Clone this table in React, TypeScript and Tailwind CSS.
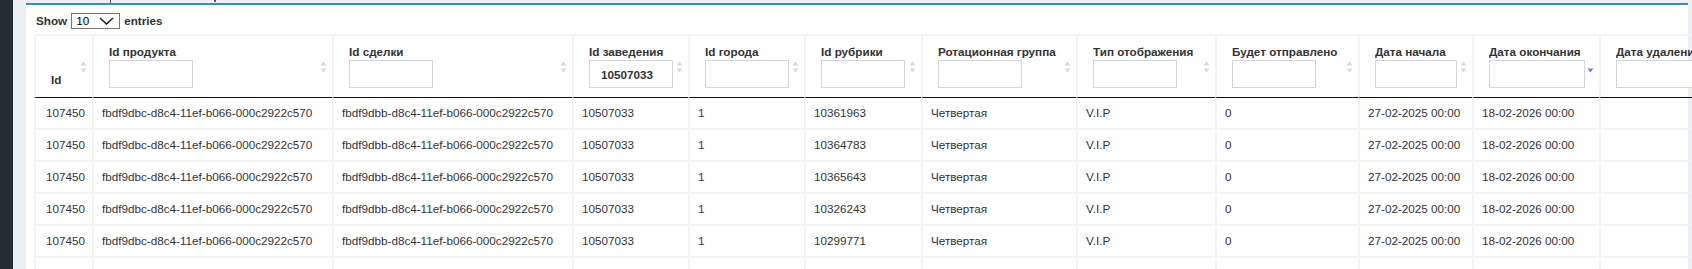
import React from "react";

type Col = {
  label: string;
  w: string;
  input?: string;
  value?: string;
  sort: "both" | "desc" | "none";
};

const cols: Col[] = [
  { label: "Id", w: "w-[58px]", sort: "both" },
  { label: "Id продукта", w: "w-[240px]", input: "w-[84px]", sort: "both" },
  { label: "Id сделки", w: "w-[240px]", input: "w-[84px]", sort: "both" },
  { label: "Id заведения", w: "w-[116px]", input: "w-[84px]", value: "10507033", sort: "both" },
  { label: "Id города", w: "w-[116px]", input: "w-[84px]", sort: "both" },
  { label: "Id рубрики", w: "w-[117px]", input: "w-[84px]", sort: "both" },
  { label: "Ротационная группа", w: "w-[155px]", input: "w-[84px]", sort: "both" },
  { label: "Тип отображения", w: "w-[139px]", input: "w-[84px]", sort: "both" },
  { label: "Будет отправлено", w: "w-[143px]", input: "w-[84px]", sort: "both" },
  { label: "Дата начала", w: "w-[114px]", input: "w-[82px]", sort: "both" },
  { label: "Дата окончания", w: "w-[127px]", input: "w-[96px]", sort: "desc" },
  { label: "Дата удаления", w: "w-[142px]", input: "w-[96px]", sort: "none" },
];

// last entry is the row cut off by the bottom edge, only its borders show
const rubrics = ["10361963", "10364783", "10365643", "10326243", "10299771", null];

function SortIcon({ kind }: { kind: Col["sort"] }) {
  if (kind === "none") return null;
  return (
    <span className="absolute right-[5px] top-1/2 -translate-y-1/2 block">
      <svg width="7" height="12" viewBox="0 0 7 12">
        {kind === "both" && <path d="M3.5 0.5L6.5 4.5H0.5Z" fill="#d9d9d9" />}
        <path d="M0.5 7.5H6.5L3.5 11.5Z" fill={kind === "desc" ? "#7b7bd6" : "#d9d9d9"} />
      </svg>
    </span>
  );
}

export default function App() {
  return (
    <div
      className="w-[1692px] h-[269px] overflow-hidden flex bg-[#ecf0f5] text-[#333]"
      style={{ fontFamily: '"Liberation Sans", Arial, sans-serif' }}
    >
      <div className="w-[13px] shrink-0 bg-[#222d32]" />
      <div className="flex-1 min-w-0 flex flex-col pl-[13px] pr-[4px]">
        {/* cut-off title above the box */}
        <div className="h-[4px] flex items-start">
          <span className="ml-[84px] w-[1px] h-[3px] bg-[#555]" />
          <span className="ml-[103px] w-[2px] h-[2px] bg-[#555]" />
        </div>
        <div className="flex-1 bg-white border-t-2 border-[#3c8dbc] pl-[8px]">
          <div className="h-[16px] mt-[8px] ml-[2px] flex items-center gap-[4px] text-[11.7px] font-bold">
            <span>Show</span>
            <div className="w-[49px] h-[16px] border border-[#767676] flex items-center justify-between pl-[4px] pr-[5px] font-normal text-black">
              <span>10</span>
              <svg width="15" height="8" viewBox="0 0 15 8">
                <path d="M1 1L7.5 7L14 1" fill="none" stroke="#222" strokeWidth="1.6" />
              </svg>
            </div>
            <span>entries</span>
          </div>
          <table className="mt-[5px] table-fixed border-separate border-spacing-0 w-[1707px] text-[11.7px]">
            <thead>
              <tr>
                {cols.map((c, i) => (
                  <th
                    key={c.label}
                    className={`${c.w} relative align-bottom text-left font-bold pl-[15px] pt-[8px] pb-[9px] border-l-2 border-t-2 border-[#f4f4f4] border-b border-b-[#111] ${
                      i === cols.length - 1 ? "border-r-2" : ""
                    }`}
                  >
                    <div className="leading-[16px] whitespace-nowrap overflow-hidden">{c.label}</div>
                    {c.input && (
                      <input
                        readOnly
                        defaultValue={c.value ?? ""}
                        className={`${c.input} block h-[28px] border border-[#d2d6de] bg-white px-[11px] font-bold text-[#333] outline-none`}
                      />
                    )}
                    <SortIcon kind={c.sort} />
                  </th>
                ))}
              </tr>
            </thead>
            <tbody>
              {rubrics.map((r, ri) => {
                const cells = r
                  ? [
                      "107450",
                      "fbdf9dbc-d8c4-11ef-b066-000c2922c570",
                      "fbdf9dbb-d8c4-11ef-b066-000c2922c570",
                      "10507033",
                      "1",
                      r,
                      "Четвертая",
                      "V.I.P",
                      "0",
                      "27-02-2025 00:00",
                      "18-02-2026 00:00",
                      "",
                    ]
                  : cols.map(() => "");
                return (
                  <tr key={ri}>
                    {cells.map((v, ci) => (
                      <td
                        key={ci}
                        className={`h-[32px] py-0 whitespace-nowrap overflow-hidden border-l-2 border-b-2 border-[#f4f4f4] ${
                          ci === 0 ? "pl-[10px]" : "pl-[8px]"
                        } ${ci === cells.length - 1 ? "border-r-2" : ""}`}
                      >
                        {v}
                      </td>
                    ))}
                  </tr>
                );
              })}
            </tbody>
          </table>
        </div>
      </div>
    </div>
  );
}
